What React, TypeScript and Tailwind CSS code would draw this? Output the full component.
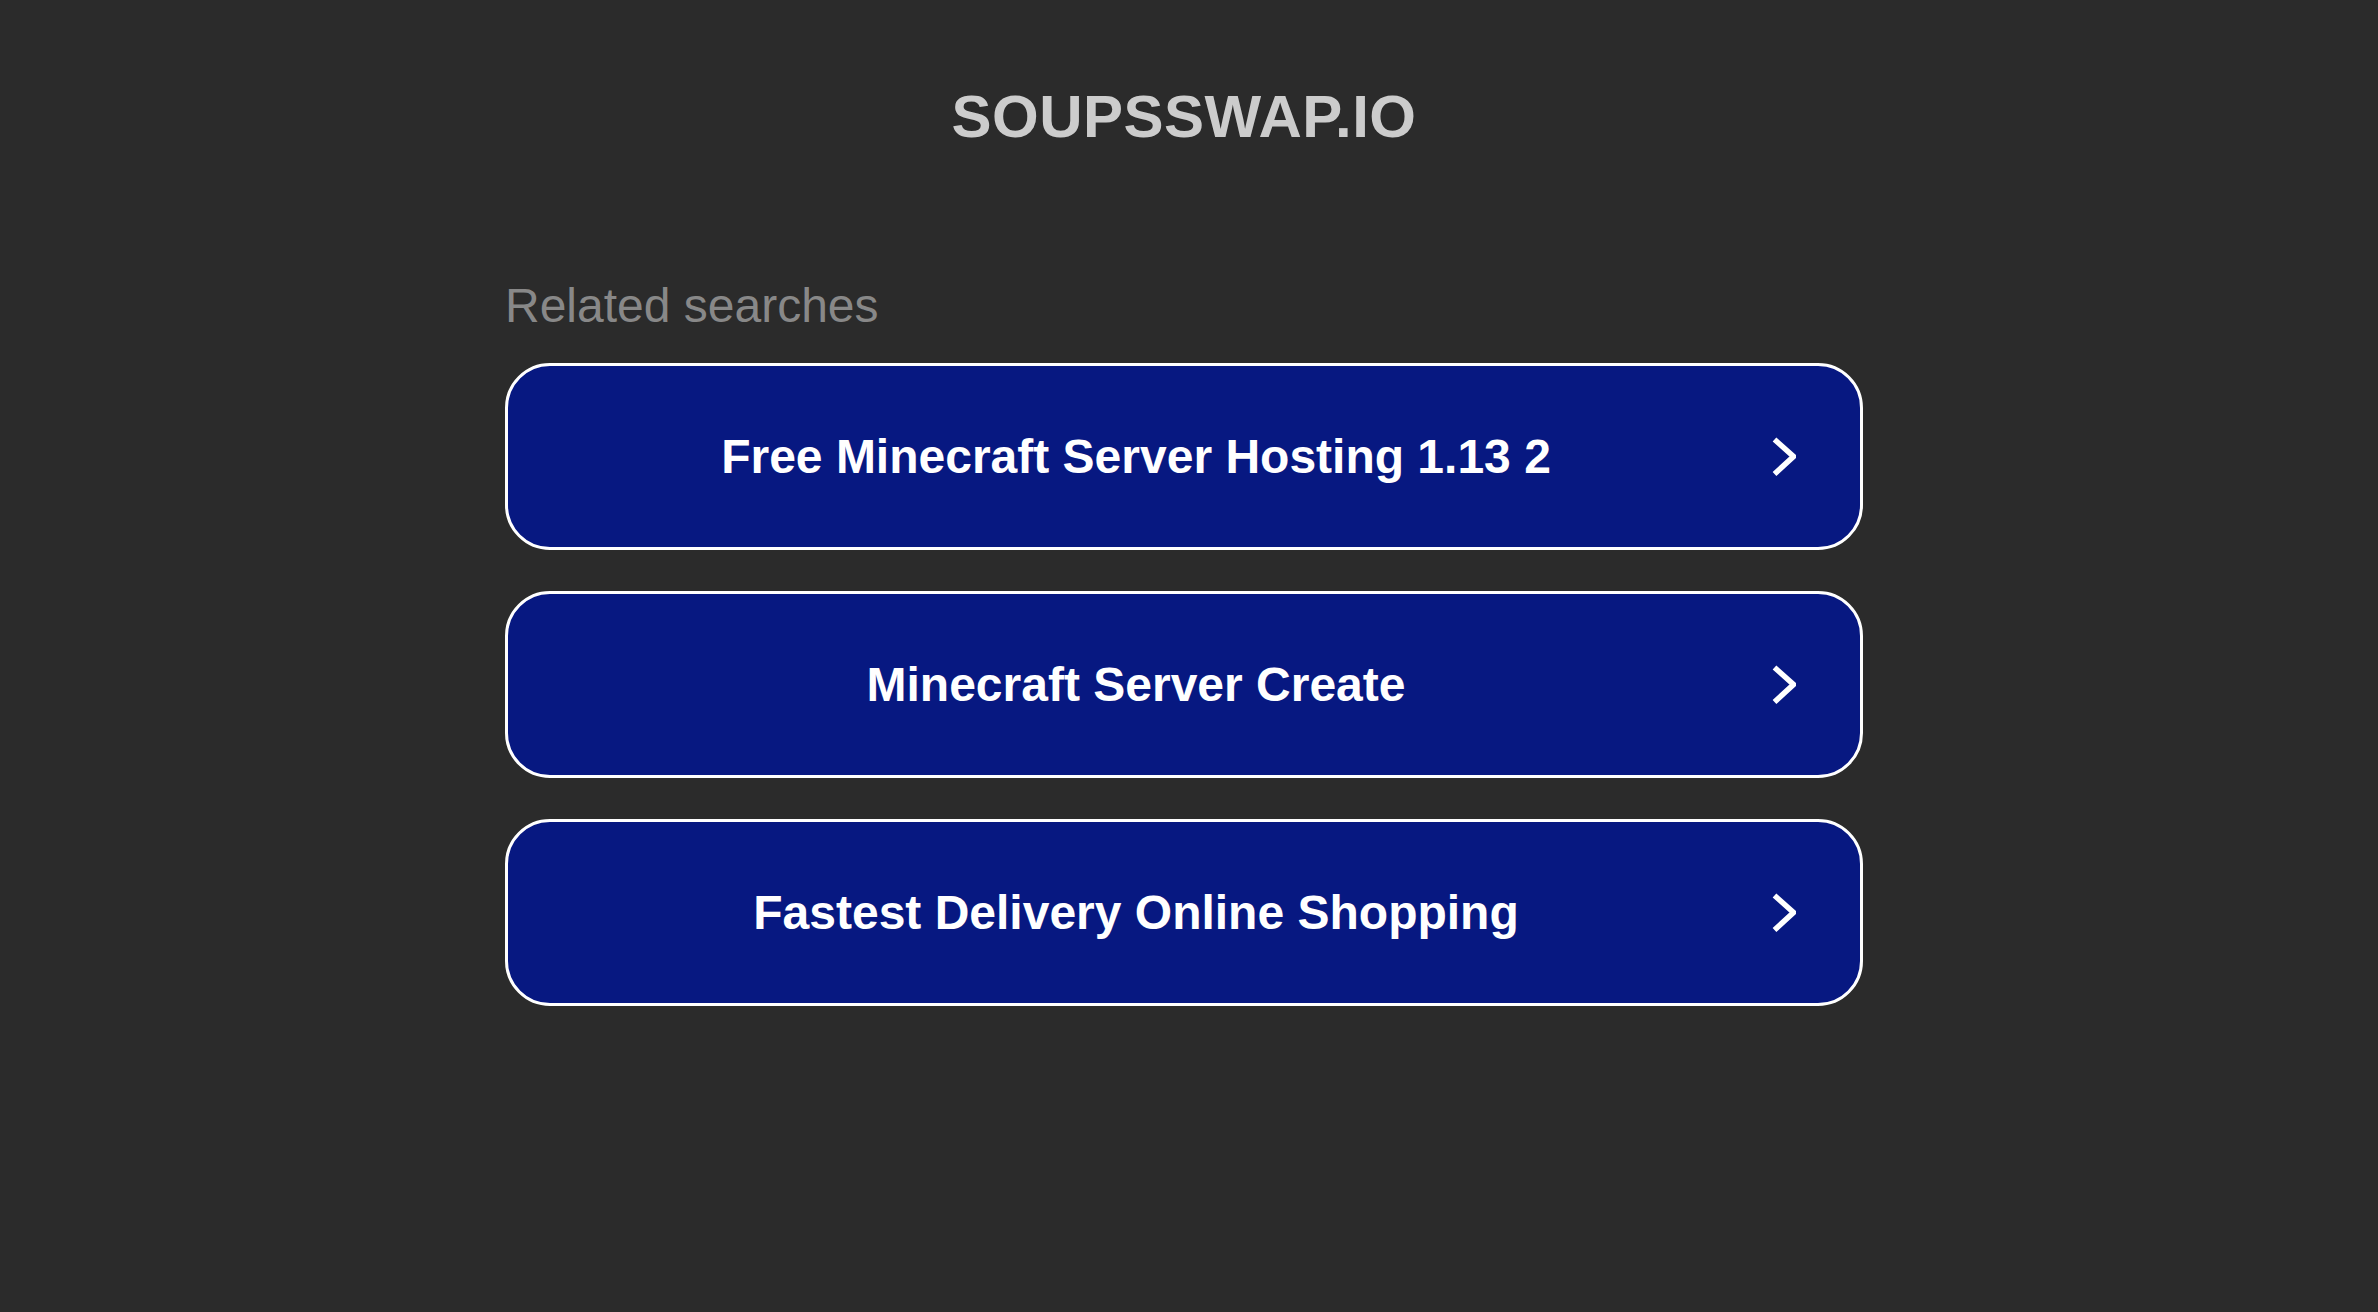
const searches = [
  "Free Minecraft Server Hosting 1.13 2",
  "Minecraft Server Create",
  "Fastest Delivery Online Shopping",
];

function Chevron() {
  return (
    <svg width="24" height="40" viewBox="0 0 24 40" className="shrink-0 ml-[8px] mr-[64px]">
      <polyline points="2.5,2.5 21.5,19.5 2.5,37" fill="none" stroke="#ffffff" strokeWidth="5.5" />
    </svg>
  );
}

export default function App() {
  return (
    <div
      className="min-h-screen w-full bg-[#2b2b2b] pr-[10px]"
      style={{ fontFamily: '"Liberation Sans", Arial, sans-serif' }}
    >
      <div className="flex flex-col items-center">
        <h1 className="mt-[87px] text-[60px] leading-[60px] font-bold tracking-[0.5px] text-[#cccccc]">
          SOUPSSWAP.IO
        </h1>

        <div className="mt-[135px] w-[1358px]">
          <div className="text-[48px] leading-[48px] text-[#888888]">Related searches</div>

          <div className="mt-[33px] flex flex-col gap-[41px]">
            {searches.map((s) => (
              <a
                key={s}
                href="#"
                className="flex h-[187px] items-center rounded-[45px] border-[3px] border-white bg-[#071881]"
              >
                <span className="flex-1 text-center text-[48px] font-bold text-white">{s}</span>
                <Chevron />
              </a>
            ))}
          </div>
        </div>
      </div>
    </div>
  );
}
